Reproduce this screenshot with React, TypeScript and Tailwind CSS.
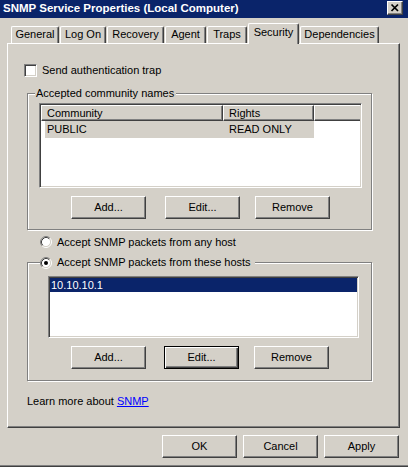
import * as React from 'react';

const raised =
    'border border-t-white border-l-white border-r-[#404040] border-b-[#404040] shadow-[inset_-1px_-1px_0_#808080]';
const sunken =
    'border border-t-[#808080] border-l-[#808080] border-r-white border-b-white shadow-[inset_1px_1px_0_#404040,inset_-1px_-1px_0_#d4d0c8] p-[1px]';
const etched = 'border border-[#808080] shadow-[1px_1px_0_#ffffff,inset_1px_1px_0_#ffffff]';

function Btn({ label, focused, className }: { label: string; focused?: boolean; className?: string }) {
    const look = focused
        ? 'border border-black shadow-[inset_1px_1px_0_#ffffff,inset_-1px_-1px_0_#404040,inset_-2px_-2px_0_#808080]'
        : raised;
    return (
        <div className={`flex h-[23px] w-[75px] shrink-0 items-center justify-center bg-[#d4d0c8] leading-[13px] ${look} ${className ?? ''}`}>
            {label}
        </div>
    );
}

function Radio({ checked }: { checked?: boolean }) {
    return (
        <svg width="12" height="12" viewBox="0 0 12 12" className="shrink-0">
            <circle cx="6" cy="6" r="4.5" fill="#ffffff" />
            <path d="M2.11 9.89 A5.5 5.5 0 0 1 9.89 2.11" stroke="#808080" fill="none" />
            <path d="M9.89 2.11 A5.5 5.5 0 0 1 2.11 9.89" stroke="#ffffff" fill="none" />
            <path d="M2.82 9.18 A4.5 4.5 0 0 1 9.18 2.82" stroke="#404040" fill="none" />
            <path d="M9.18 2.82 A4.5 4.5 0 0 1 2.82 9.18" stroke="#d4d0c8" fill="none" />
            {checked && <circle cx="6" cy="6" r="2" fill="#000000" />}
        </svg>
    );
}

const tabs = [
    { name: 'General', w: 'w-[48px]' },
    { name: 'Log On', w: 'w-[46px]' },
    { name: 'Recovery', w: 'w-[57px]' },
    { name: 'Agent', w: 'w-[41px]' },
    { name: 'Traps', w: 'w-[40px]' },
    { name: 'Security', w: 'w-[51px]', active: true },
    { name: 'Dependencies', w: 'w-[79px]' },
];

export default function App() {
    return (
        <div className="flex h-[467px] w-[408px] flex-col overflow-hidden bg-[#d4d0c8] font-['Liberation_Sans',Arial,sans-serif] text-[11px] text-black shadow-[inset_0_-1px_0_#404040,inset_0_-2px_0_#808080]">
            {/* title bar */}
            <div className="flex h-[18px] shrink-0 items-start justify-between bg-[#0a246a] pl-[3px] pr-[5px] pt-[1px]">
                <span className="text-[11.5px] font-bold leading-[14px] text-white">SNMP Service Properties (Local Computer)</span>
                <div className={`relative h-[14px] w-[16px] bg-[#d4d0c8] ${raised}`}>
                    <svg width="14" height="12" viewBox="0 0 14 12" className="absolute left-0 top-0">
                        <path d="M3.5 2.5 L10 9 M10 2.5 L3.5 9" stroke="#000000" strokeWidth="1.7" />
                    </svg>
                </div>
            </div>

            {/* tabs */}
            <div className="flex shrink-0 items-end gap-[1px] pl-[11px] pt-[5px]">
                {tabs.map(t =>
                    t.active ? (
                        <div
                            key={t.name}
                            className={`relative z-10 -mb-[1px] flex h-[21px] ${t.w} justify-center rounded-t-[2px] border-l border-t border-l-white border-t-white border-r border-r-[#404040] bg-[#d4d0c8] pt-[2px] leading-[13px] shadow-[inset_-1px_0_0_#808080]`}
                        >
                            {t.name}
                        </div>
                    ) : (
                        <div
                            key={t.name}
                            className={`flex h-[17px] ${t.w} justify-center rounded-t-[2px] border-l border-t border-l-white border-t-white border-r border-r-[#404040] pt-[1px] leading-[13px] shadow-[inset_-1px_0_0_#808080]`}
                        >
                            {t.name}
                        </div>
                    )
                )}
            </div>

            {/* tab page */}
            <div className={`ml-[7px] flex h-[385px] w-[393px] shrink-0 flex-col pl-[19px] leading-[13px] ${raised}`}>
                <div className="ml-[-3px] mt-[20px] flex h-[13px] items-center">
                    <div className={`h-[13px] w-[13px] bg-white ${sunken}`} />
                    <span className="ml-[5px]">Send authentication trap</span>
                </div>

                {/* community names */}
                <div className={`relative mt-[16px] flex h-[137px] w-[345px] flex-col ${etched}`}>
                    <span className="absolute left-[7px] top-[-7px] bg-[#d4d0c8] pl-[1px] pr-[2px]">Accepted community names</span>
                    <div className={`ml-[11px] mt-[9px] h-[85px] w-[323px] bg-white ${sunken}`}>
                        <div className="flex h-[16px]">
                            <div className={`flex w-[182px] items-center bg-[#d4d0c8] pl-[5px] ${raised}`}>Community</div>
                            <div className={`flex w-[91px] items-center bg-[#d4d0c8] pl-[5px] ${raised}`}>Rights</div>
                            <div className="flex-1 border-l border-t border-b border-l-white border-t-white border-b-[#404040] bg-[#d4d0c8] shadow-[inset_0_-1px_0_#808080]" />
                        </div>
                        <div className="ml-[4px] flex h-[17px] w-[269px] items-center bg-[#d4d0c8]">
                            <span className="w-[182px] pl-[2px]">PUBLIC</span>
                            <span className="pl-[2px]">READ ONLY</span>
                        </div>
                    </div>
                    <div className="mt-[8px] flex">
                        <Btn label="Add..." className="ml-[43px]" />
                        <Btn label="Edit..." className="ml-[19px]" />
                        <Btn label="Remove" className="ml-[15px]" />
                    </div>
                </div>

                <div className="ml-[13px] mt-[6px] flex h-[12px] items-center">
                    <Radio />
                    <span className="ml-[5px]">Accept SNMP packets from any host</span>
                </div>

                {/* permitted hosts */}
                <div className={`relative mt-[14px] flex h-[119px] w-[345px] flex-col ${etched}`}>
                    <div className="absolute left-[12px] top-[-7px] flex h-[13px] items-center bg-[#d4d0c8] pr-[4px]">
                        <Radio checked />
                        <span className="ml-[5px]">Accept SNMP packets from these hosts</span>
                    </div>
                    <div className={`ml-[20px] mt-[13px] h-[62px] w-[311px] bg-white ${sunken}`}>
                        <div className="h-[14px] bg-[#0a246a] pl-[1px] leading-[14px] text-white">10.10.10.1</div>
                    </div>
                    <div className="mt-[8px] flex">
                        <Btn label="Add..." className="ml-[43px]" />
                        <Btn label="Edit..." focused className="ml-[18px]" />
                        <Btn label="Remove" className="ml-[15px]" />
                    </div>
                </div>

                <div className="mt-[14px]">
                    Learn more about <span className="text-[#0000ff] underline">SNMP</span>
                </div>
            </div>

            {/* dialog buttons */}
            <div className="mt-[7px] flex justify-end gap-[6px] pr-[9px]">
                <Btn label="OK" />
                <Btn label="Cancel" />
                <Btn label="Apply" />
            </div>
        </div>
    );
}
